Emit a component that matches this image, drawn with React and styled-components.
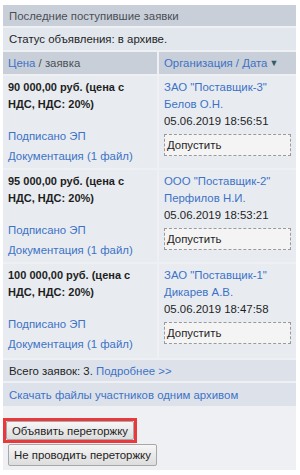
import styled, { createGlobalStyle } from "styled-components";

const Global = createGlobalStyle`
  *, *::before, *::after {
    box-sizing: border-box;
  }
  body {
    margin: 0;
    background: #fff;
    font-family: "Liberation Sans", Arial, sans-serif;
    font-size: 11.4px;
    color: #1e1e1e;
  }
`;

const Panel = styled.div`
  margin: 5px 4px 0 3px;
  width: 293px;
  background: #eef0f4;
  display: flex;
  flex-direction: column;
  gap: 2px;
`;

const Bar = styled.div`
  background: ${(p) => p.$bg};
  padding: 0 6px;
  height: ${(p) => p.$h}px;
  display: flex;
  align-items: center;
  color: ${(p) => (p.$muted ? "#4a4f57" : "#1e1e1e")};
`;

const Grid = styled.div`
  display: grid;
  grid-template-columns: 154px 1fr;
  column-gap: 2px;
  row-gap: 2px;
`;

const HeadCell = styled.div`
  background: #c9cfd8;
  height: 22px;
  display: flex;
  align-items: center;
  padding: 0 5px;
  color: #4a4f57;
`;

const Cell = styled.div`
  background: #e8ecf1;
  padding: 3px 5px 0;
  height: ${(p) => p.$h}px;
  line-height: 17px;
`;

const Price = styled.div`
  font-weight: bold;
  font-size: 11px;
  margin-bottom: 13px;
`;

const Link = styled.a`
  color: #3d72c6;
  text-decoration: none;
  display: ${(p) => (p.$block ? "block" : "inline")};
  line-height: ${(p) => p.$lh || "inherit"};
`;

const Arrow = styled.span`
  color: #2f5e6a;
  font-size: 9px;
  margin-left: 2px;
`;

const Admit = styled.div`
  margin-top: 4px;
  height: 22px;
  border: 1px dashed #9a9a9a;
  background: #f4f4f4;
  display: flex;
  align-items: center;
  padding-left: 2px;
`;

const Actions = styled.div`
  padding: 10px 0 4px 0;
  display: flex;
  flex-direction: column;
  align-items: flex-start;
  gap: 1px;
`;

const Highlight = styled.div`
  border: 3px solid #e8393d;
`;

const Button = styled.button`
  font-family: "Liberation Sans", Arial, sans-serif;
  font-size: 11.4px;
  color: #1e1e1e;
  height: ${(p) => p.$h}px;
  padding: 0 5px;
  border: 1px solid #a8a8a8;
  border-radius: 2px;
  background: linear-gradient(#f6f6f6, #dddddd);
  margin-left: ${(p) => (p.$indent ? 5 : 0)}px;
`;

const bids = [
  {
    price: "90 000,00 руб. (цена с НДС, НДС: 20%)",
    org: 'ЗАО "Поставщик-3"',
    person: "Белов О.Н.",
    date: "05.06.2019 18:56:51",
    h: 92,
  },
  {
    price: "95 000,00 руб. (цена с НДС, НДС: 20%)",
    org: 'ООО "Поставщик-2"',
    person: "Перфилов Н.И.",
    date: "05.06.2019 18:53:21",
    h: 92,
  },
  {
    price: "100 000,00 руб. (цена с НДС, НДС: 20%)",
    org: 'ЗАО "Поставщик-1"',
    person: "Дикарев А.В.",
    date: "05.06.2019 18:47:58",
    h: 94,
  },
];

export default function App() {
  return (
    <>
      <Global />
      <Panel>
        <Bar $bg="#c9cfd8" $h={21} $muted>
          Последние поступившие заявки
        </Bar>
        <Bar $bg="#e2e7ee" $h={22}>
          Статус объявления: в архиве.
        </Bar>
        <Grid>
          <HeadCell>
            <Link>Цена</Link>&nbsp;/ заявка
          </HeadCell>
          <HeadCell>
            <Link>Организация / Дата</Link>
            <Arrow>▼</Arrow>
          </HeadCell>
          {bids.map((b) => [
            <Cell key={b.org + "l"} $h={b.h}>
              <Price>{b.price}</Price>
              <Link $block $lh="20px">Подписано ЭП</Link>
              <Link $block $lh="20px">Документация (1 файл)</Link>
            </Cell>,
            <Cell key={b.org + "r"} $h={b.h}>
              <Link $block>{b.org}</Link>
              <Link $block>{b.person}</Link>
              <div>{b.date}</div>
              <Admit>Допустить</Admit>
            </Cell>,
          ])}
        </Grid>
        <Bar $bg="#dde2ea" $h={21}>
          Всего заявок: 3.&nbsp;<Link>Подробнее &gt;&gt;</Link>
        </Bar>
        <Bar $bg="#dde2ea" $h={23}>
          <Link>Скачать файлы участников одним архивом</Link>
        </Bar>
        <Actions>
          <Highlight>
            <Button $h={19}>Объявить переторжку</Button>
          </Highlight>
          <Button $h={22} $indent>Не проводить переторжку</Button>
        </Actions>
      </Panel>
    </>
  );
}
